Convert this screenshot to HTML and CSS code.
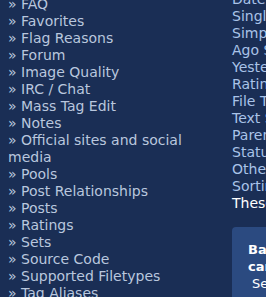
FILE: index.html
```html
<!DOCTYPE html>
<html lang="en">
<head>
    <meta charset="UTF-8">
    <meta name="viewport" content="width=device-width, initial-scale=1.0">
    <title>Help</title>
    <link rel="stylesheet" href="styles.css">
</head>
<body>
    <div class="page">
        <div class="help-index">
            <ul class="help-list">
                <li><a href="#">FAQ</a></li>
                <li><a href="#">Favorites</a></li>
                <li><a href="#">Flag Reasons</a></li>
                <li><a href="#">Forum</a></li>
                <li><a href="#">Image Quality</a></li>
                <li><a href="#">IRC / Chat</a></li>
                <li><a href="#">Mass Tag Edit</a></li>
                <li><a href="#">Notes</a></li>
                <li><a href="#">Official sites and social media</a></li>
                <li><a href="#">Pools</a></li>
                <li><a href="#">Post Relationships</a></li>
                <li><a href="#">Posts</a></li>
                <li><a href="#">Ratings</a></li>
                <li><a href="#">Sets</a></li>
                <li><a href="#">Source Code</a></li>
                <li><a href="#">Supported Filetypes</a></li>
                <li><a href="#">Tag Aliases</a></li>
            </ul>
        </div>

        <div class="help-content">
            <ul class="topic-list">
                <li>Date Searches</li>
                <li>Single Tags</li>
                <li>Simple Searches</li>
                <li>Ago Searches</li>
                <li>Yesterday</li>
                <li>Rating Searches</li>
                <li>File Types</li>
                <li>Text Searches</li>
                <li>Parent Searches</li>
                <li>Status Searches</li>
                <li>Other Searches</li>
                <li>Sorting</li>
                <li class="topic-note">These searches can be combined</li>
            </ul>

            <div class="notice">
                <p class="notice-title">Basic searching<br>can be done here</p>
                <p class="notice-text">Search tips</p>
            </div>
        </div>
    </div>
</body>
</html>
```

FILE: styles.css
```css
body {
    margin: 0;
    background-color: #1a2e55;
    font-family: 'DejaVu Sans', Verdana, sans-serif;
    font-size: 14px;
    line-height: 17px;
    overflow: hidden;
}

.page {
    display: flex;
    gap: 8px;
    margin-top: -4px;
}

.help-index {
    flex: 0 0 216px;
    padding-left: 8px;
}

.help-list {
    list-style: none;
    margin: 0;
    padding: 0;
}

.help-list li::before {
    content: "\00bb\0020";
    color: #b9c7de;
}

.help-list a {
    color: #b9c7de;
    text-decoration: none;
}

.help-content {
    flex: 0 0 300px;
    margin-top: -5px;
}

.topic-list {
    list-style: none;
    margin: 0;
    padding: 0;
    color: #a9c3e8;
    white-space: nowrap;
}

.topic-note {
    color: #ffffff;
}

.notice {
    margin-top: 15px;
    padding: 14px 16px;
    background-color: #2b4a80;
    border-radius: 4px;
    color: #ffffff;
    font-size: 13px;
}

.notice-title {
    margin: 0;
    font-weight: bold;
}

.notice-text {
    margin: 0 0 0 4px;
}
```
